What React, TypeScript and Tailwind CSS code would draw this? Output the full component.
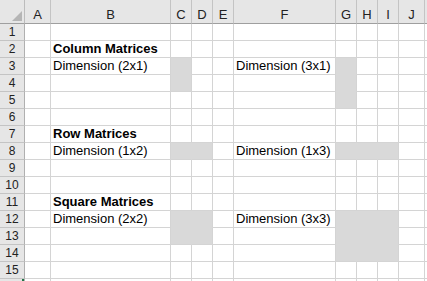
import React from "react";

const cols = ["A", "B", "C", "D", "E", "F", "G", "H", "I", "J"];

// cells filled grey in the sheet
const shaded = new Set([
  "C3", "C4",
  "G3", "G4", "G5",
  "C8", "D8",
  "G8", "H8", "I8",
  "C12", "D12", "C13", "D13",
  "G12", "H12", "I12", "G13", "H13", "I13", "G14", "H14", "I14",
]);

const values: Record<string, { text: string; bold?: boolean }> = {
  B2: { text: "Column Matrices", bold: true },
  B3: { text: "Dimension (2x1)" },
  F3: { text: "Dimension (3x1)" },
  B7: { text: "Row Matrices", bold: true },
  B8: { text: "Dimension (1x2)" },
  F8: { text: "Dimension (1x3)" },
  B11: { text: "Square Matrices", bold: true },
  B12: { text: "Dimension (2x2)" },
  F12: { text: "Dimension (3x3)" },
};

const nextCol = (c: string) => String.fromCharCode(c.charCodeAt(0) + 1);

const Cell: React.FC<{ col: string; row: number }> = ({ col, row }) => {
  const id = col + row;
  const filled = shaded.has(id);
  const rightFilled = filled && shaded.has(nextCol(col) + row);
  const belowFilled = filled && shaded.has(col + (row + 1));
  const v = values[id];

  return (
    <div
      className={`relative flex items-start whitespace-nowrap border-r border-b pl-[2px] text-[13px] leading-[16px] text-black ${
        filled ? "bg-[#d9d9d9]" : "bg-white"
      } ${rightFilled ? "border-r-[#d9d9d9]" : "border-r-[#d4d4d4]"} ${
        belowFilled ? "border-b-[#d9d9d9]" : "border-b-[#d4d4d4]"
      } ${v?.bold ? "font-bold" : "font-normal"}`}
    >
      {v?.text}
    </div>
  );
};

export default function App() {
  const rows = Array.from({ length: 16 }, (_, i) => i + 1);

  return (
    <div
      className="h-[281px] w-[427px] overflow-hidden bg-white"
      style={{ fontFamily: '"Liberation Sans", Arial, sans-serif' }}
    >
      <div className="grid grid-cols-[25px_26px_120px_21px_21px_21px_102px_21px_21px_21px_26px_1fr] grid-rows-[24px_repeat(16,17px)]">
        {/* corner */}
        <div className="flex items-end justify-end border-r border-b border-r-[#bcbcbc] border-b-[#9f9f9f] bg-[#e6e6e6] pr-[2px] pb-[2px]">
          <svg width="10" height="10" viewBox="0 0 10 10">
            <polygon points="10,0 10,10 0,10" fill="#b5b5b5" />
          </svg>
        </div>
        {/* column headers */}
        {cols.map((c) => (
          <div
            key={c}
            className="flex items-end justify-center border-r border-b border-r-[#c4c4c4] border-b-[#9f9f9f] bg-[#e6e6e6] pb-[1px] text-[13px] leading-[15px] text-[#222]"
          >
            {c}
          </div>
        ))}
        <div className="border-b border-b-[#9f9f9f] bg-[#e6e6e6]" />

        {rows.map((r) => (
          <React.Fragment key={r}>
            <div className="flex items-start justify-center border-r border-b border-r-[#b0b0b0] border-b-[#c4c4c4] bg-[#e6e6e6] text-[12px] leading-[16px] text-[#222]">
              {r < 16 ? r : ""}
              {r === 16 && <div className="ml-auto h-[2px] w-[2px] bg-[#217346]" />}
            </div>
            {cols.map((c) => (
              <Cell key={c + r} col={c} row={r} />
            ))}
            <div className="border-b border-b-[#d4d4d4] bg-white" />
          </React.Fragment>
        ))}
      </div>
    </div>
  );
}
